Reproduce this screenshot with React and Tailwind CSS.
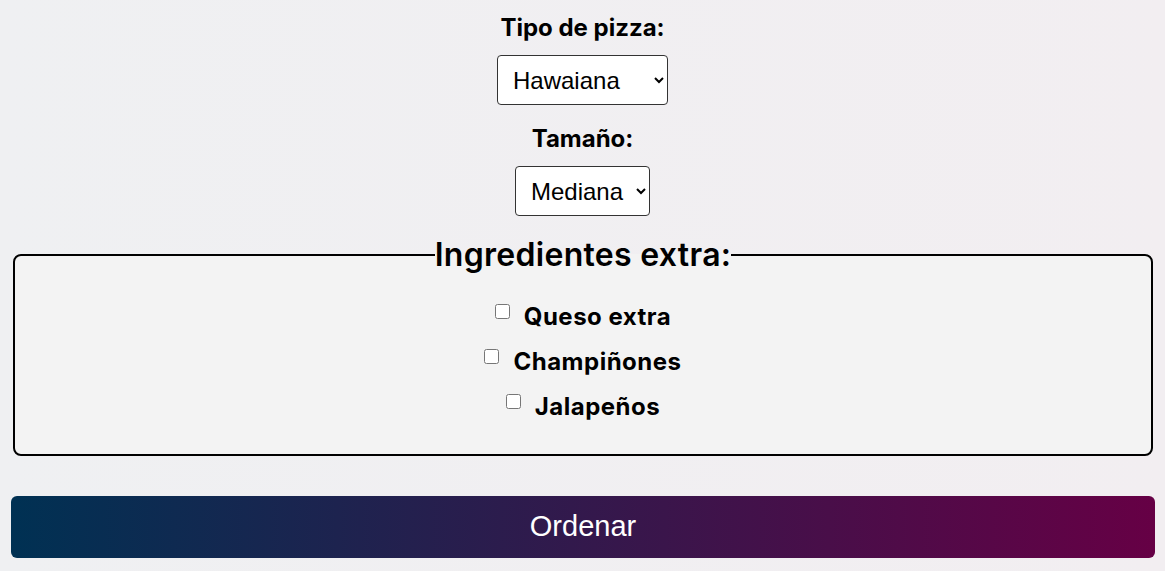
export default function App() {
  return (
    <div className="min-h-[571px] bg-[linear-gradient(to_right,#eff0f2,#f2eef1)] text-black font-['Inter',sans-serif] pt-[14px] pb-[13px]">
      <div className="flex flex-col items-center">
        <label className="block text-[24px] leading-[28px] font-bold">Tipo de pizza:</label>
        <select defaultValue="Hawaiana" className="mt-[13px] w-[171px] h-[50px] bg-white border border-[#333] rounded-[4px] pl-[11px] pr-[6px] text-[24px] font-['Liberation_Sans',Arial,sans-serif]">
          <option>Hawaiana</option>
          <option>Pepperoni</option>
          <option>Vegetariana</option>
        </select>
        <label className="block mt-[20px] text-[24px] leading-[28px] font-bold">Tamaño:</label>
        <select defaultValue="Mediana" className="mt-[13px] w-[135px] h-[50px] bg-white border border-[#333] rounded-[4px] pl-[11px] pr-[6px] text-[24px] font-['Liberation_Sans',Arial,sans-serif]">
          <option>Pequeña</option>
          <option>Mediana</option>
          <option>Grande</option>
        </select>
      </div>
      <fieldset className="mt-[19px] ml-[13px] mr-[12px] border-2 border-black rounded-[8px] bg-[#f3f3f3] pt-[19px] pb-[25px]">
        <legend className="mx-auto px-0 text-[32px] leading-[40px] font-semibold tracking-[0.3px]">Ingredientes extra:</legend>
        <div className="flex flex-col items-center">
          {["Queso extra", "Champiñones", "Jalapeños"].map((t) => (
            <label key={t} className="flex items-center h-[45px] gap-[14px]">
              <input type="checkbox" className="w-[15px] h-[15px] mb-[10px]" />
              <span className="text-[24px] font-bold tracking-[0.5px]">{t}</span>
            </label>
          ))}
        </div>
      </fieldset>
      <div className="ml-[11px] mr-[10px] mt-[40px]">
        <button className="w-full h-[62px] rounded-[6px] bg-[linear-gradient(to_right,#003153,#660045)] text-white text-[29px] font-['Liberation_Sans',Arial,sans-serif]">
          Ordenar
        </button>
      </div>
    </div>
  );
}
